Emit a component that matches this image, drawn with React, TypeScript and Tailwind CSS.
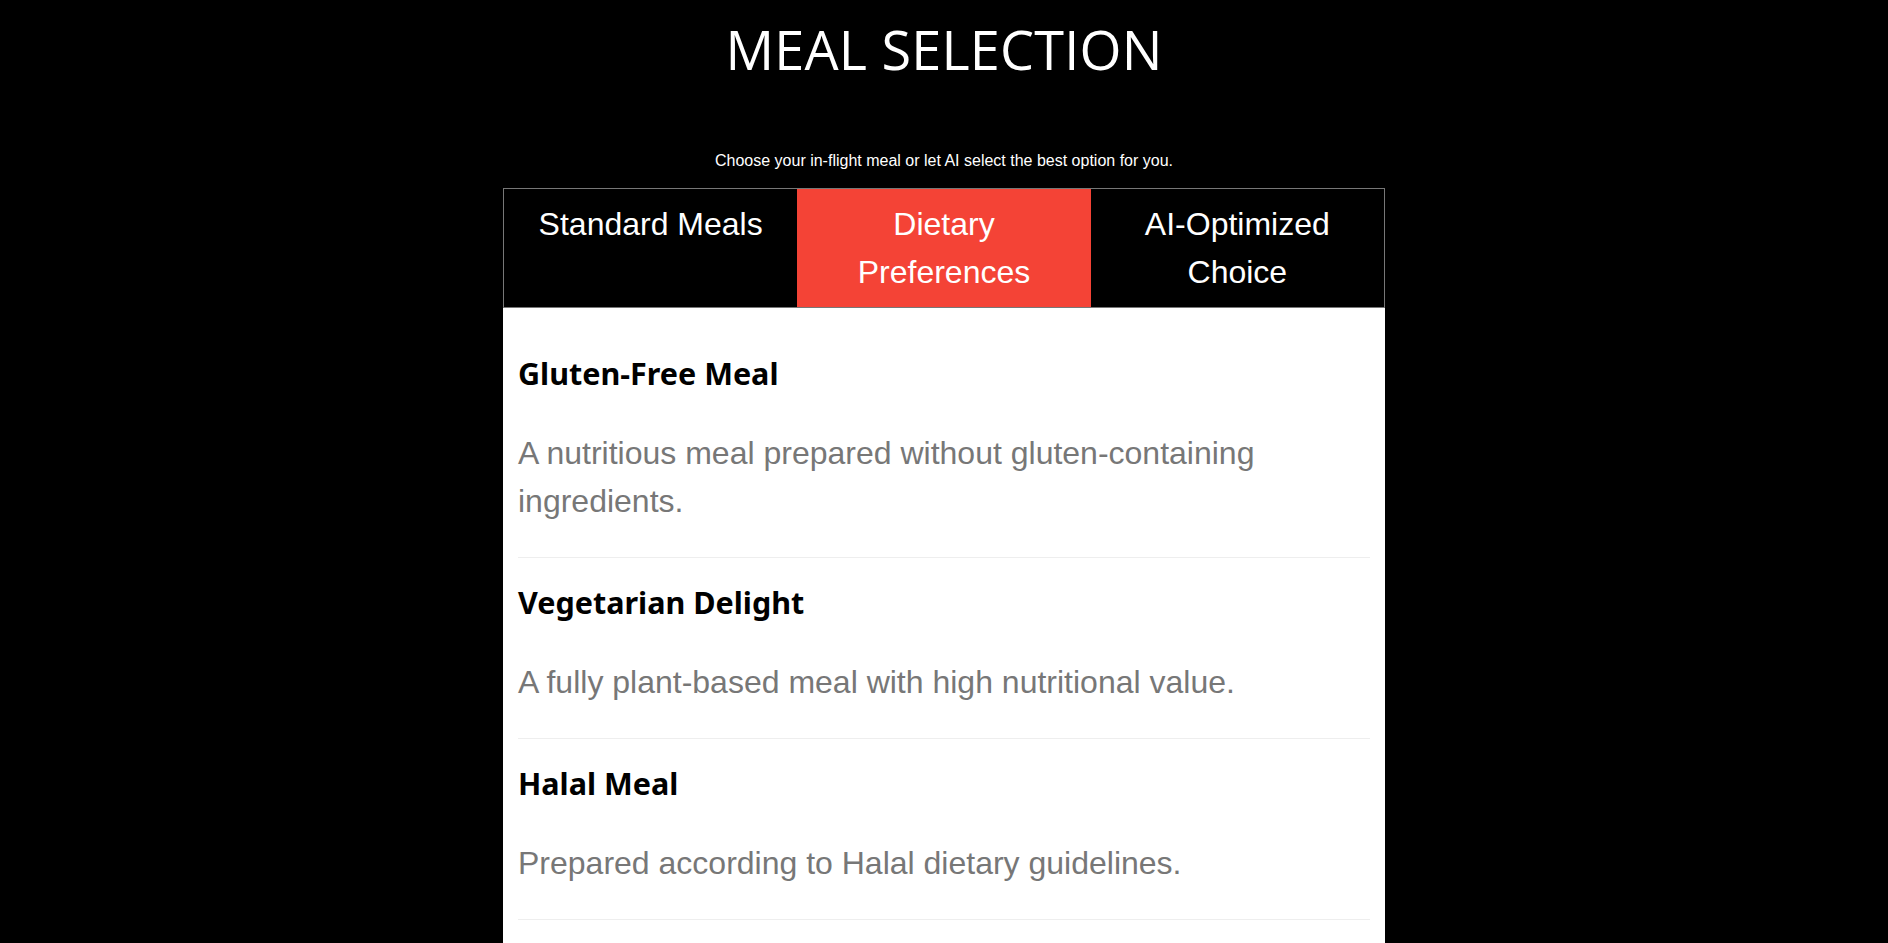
import { useState } from "react";

type Meal = { name: string; desc: string };

const tabs = ["Standard Meals", "Dietary Preferences", "AI-Optimized Choice"];

const meals: Meal[] = [
  { name: "Gluten-Free Meal", desc: "A nutritious meal prepared without gluten-containing ingredients." },
  { name: "Vegetarian Delight", desc: "A fully plant-based meal with high nutritional value." },
  { name: "Halal Meal", desc: "Prepared according to Halal dietary guidelines." },
  { name: "Kosher Meal", desc: "Certified kosher meal prepared under supervision." },
];

export default function App() {
  const [active, setActive] = useState(1);

  return (
    <div className="min-h-screen bg-black flex flex-col items-center font-['Liberation_Sans',Arial,sans-serif]">
      <h1 className="mt-[20px] text-[54px] leading-[58px] font-normal text-white tracking-[0.2px] font-['Open_Sans','Noto_Sans',sans-serif]">
        MEAL SELECTION
      </h1>

      <p className="mt-[73px] text-[16px] leading-[20px] text-white">
        Choose your in-flight meal or let AI select the best option for you.
      </p>

      <div className="mt-[17px] w-[882px]">
        {/* tab bar */}
        <div className="grid grid-cols-3 border border-[#777]">
          {tabs.map((t, i) => (
            <div
              key={t}
              role="button"
              onClick={() => setActive(i)}
              className={
                "cursor-pointer px-[14px] py-[11px] text-[32px] leading-[48px] text-white text-center " +
                (i === active ? "bg-[#f44336]" : "bg-black")
              }
            >
              {t}
            </div>
          ))}
        </div>

        {/* lista */}
        <div className="bg-white px-[15px] pt-[21px]">
          {meals.map((m) => (
            <div key={m.name} className="border-b border-[#eee] pt-[24px] pb-[32px]">
              <h3 className="text-[30.5px] leading-[40px] font-bold text-black font-['Noto_Sans','Open_Sans',sans-serif]">
                {m.name}
              </h3>
              <p className="mt-[36px] text-[32px] leading-[48px] text-[#777]">{m.desc}</p>
            </div>
          ))}
        </div>
      </div>
    </div>
  );
}
